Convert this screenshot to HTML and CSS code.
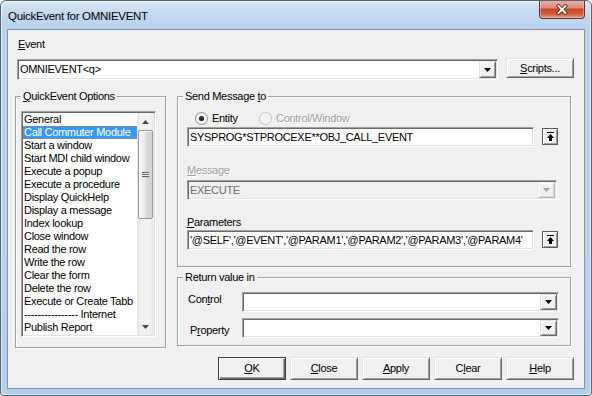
FILE: index.html
```html
<!DOCTYPE html>
<html>
<head>
<meta charset="utf-8">
<link rel="stylesheet" href="styles.css">
</head>
<body>
<div class="window">
  <div class="titlebar">
    <span class="title">QuickEvent for OMNIEVENT</span>
    <div class="close-btn">
      <svg width="12" height="11" viewBox="0 0 12 11"><path d="M2.5 2 L9.5 9 M9.5 2 L2.5 9" stroke="#5a2a24" stroke-width="3.6" stroke-linecap="square" fill="none"/><path d="M2.5 2 L9.5 9 M9.5 2 L2.5 9" stroke="#fff" stroke-width="1.8" stroke-linecap="square" fill="none"/></svg>
    </div>
  </div>
  <div class="client">
    <div class="event-label"><u>E</u>vent</div>
    <div class="event-row">
      <div class="combo combo-event">
        <span class="val">OMNIEVENT&lt;q&gt;</span>
        <span class="drop raised"><svg width="7" height="4" viewBox="0 0 7 4"><path d="M0 0H7L3.5 4Z" fill="#000"/></svg></span>
      </div>
      <button class="btn raised btn-scripts"><span><u>S</u>cripts...</span></button>
    </div>
    <div class="main">
      <div class="group group-options">
        <span class="legend"><u>Q</u>uickEvent Options</span>
        <div class="list sunken">
          <div class="items">
            <div class="item">General</div>
            <div class="item sel">Call Commuter Module</div>
            <div class="item">Start a window</div>
            <div class="item">Start MDI child window</div>
            <div class="item">Execute a popup</div>
            <div class="item">Execute a procedure</div>
            <div class="item">Display QuickHelp</div>
            <div class="item">Display a message</div>
            <div class="item">Index lookup</div>
            <div class="item">Close window</div>
            <div class="item">Read the row</div>
            <div class="item">Write the row</div>
            <div class="item">Clear the form</div>
            <div class="item">Delete the row</div>
            <div class="item">Execute or Create Tabb</div>
            <div class="item">---------------- Internet</div>
            <div class="item">Publish Report</div>
          </div>
          <div class="vscroll">
            <div class="sb-arrow"><svg width="7" height="4" viewBox="0 0 7 4"><path d="M3.5 0L7 4H0Z" fill="#4a4a4a"/></svg></div>
            <div class="thumb"><div class="grip"></div></div>
            <div class="sb-space"></div>
            <div class="sb-arrow"><svg width="7" height="4" viewBox="0 0 7 4"><path d="M0 0H7L3.5 4Z" fill="#4a4a4a"/></svg></div>
          </div>
        </div>
      </div>
      <div class="right">
        <div class="group group-send">
          <span class="legend">Send Message <u>t</u>o</span>
          <div class="radio-row">
            <div class="radio-opt first"><span class="radio"><span class="dot"></span></span><span>Entity</span></div>
            <div class="radio-opt"><span class="radio radio-dis"></span><span class="dis">Control/Window</span></div>
          </div>
          <div class="field-row">
            <div class="field sunken">SYSPROG*STPROCEXE**OBJ_CALL_EVENT</div>
            <div class="upbtn">
              <svg width="9" height="10" viewBox="0 0 9 10"><rect x="1" y="0" width="7" height="1" fill="#000"/><path d="M4.5 2L8 6H1Z" fill="#000"/><rect x="3" y="6" width="3" height="3" fill="#000"/></svg>
            </div>
          </div>
          <div class="label label-msg dis"><u>M</u>essage</div>
          <div class="combo combo-msg">
            <span class="val">EXECUTE</span>
            <span class="drop raised-dis"><svg width="7" height="4" viewBox="0 0 7 4"><path d="M0 0H7L3.5 4Z" fill="#a3a3a3"/></svg></span>
          </div>
          <div class="label label-par"><u>P</u>arameters</div>
          <div class="field-row field-row-par">
            <div class="field sunken">'@SELF','@EVENT','@PARAM1','@PARAM2','@PARAM3','@PARAM4'</div>
            <div class="upbtn">
              <svg width="9" height="10" viewBox="0 0 9 10"><rect x="1" y="0" width="7" height="1" fill="#000"/><path d="M4.5 2L8 6H1Z" fill="#000"/><rect x="3" y="6" width="3" height="3" fill="#000"/></svg>
            </div>
          </div>
        </div>
        <div class="group group-return">
          <span class="legend">Return value in</span>
          <div class="rv-row">
            <span class="rv-label rv-control">Con<u>t</u>rol</span>
            <div class="combo combo-rv">
              <span class="val"></span>
              <span class="drop raised"><svg width="7" height="4" viewBox="0 0 7 4"><path d="M0 0H7L3.5 4Z" fill="#000"/></svg></span>
            </div>
          </div>
          <div class="rv-row rv-row-2">
            <span class="rv-label rv-property">P<u>r</u>operty</span>
            <div class="combo combo-rv">
              <span class="val"></span>
              <span class="drop raised"><svg width="7" height="4" viewBox="0 0 7 4"><path d="M0 0H7L3.5 4Z" fill="#000"/></svg></span>
            </div>
          </div>
        </div>
      </div>
    </div>
    <div class="buttons">
      <button class="btn btn-dlg btn-default"><span><u>O</u>K</span></button>
      <button class="btn btn-dlg raised"><span><u>C</u>lose</span></button>
      <button class="btn btn-dlg raised"><span><u>A</u>pply</span></button>
      <button class="btn btn-dlg raised"><span>C<u>l</u>ear</span></button>
      <button class="btn btn-dlg raised"><span><u>H</u>elp</span></button>
    </div>
  </div>
</div>
</body>
</html>
```

FILE: styles.css
```css
html, body {
  margin: 0;
  padding: 0;
  background: #ffffff;
}

body {
  font-family: "Liberation Sans", Arial, sans-serif;
  font-size: 11px;
  line-height: 13px;
  letter-spacing: -0.3px;
  color: #000;
}

u {
  text-decoration: underline;
  text-underline-offset: 1px;
}

.window {
  width: 592px;
  height: 396px;
  box-sizing: border-box;
  border: 1px solid #51647a;
  border-radius: 6px 6px 3px 3px;
  background: linear-gradient(to bottom, #d6e7f8 0px, #c2d8f0 14px, #b9d2ee 28px, #b4cfec 100%);
  box-shadow: inset 0 0 0 1px rgba(255, 255, 255, 0.6);
  display: flex;
  flex-direction: column;
  overflow: hidden;
}

.titlebar {
  height: 28px;
  flex: none;
  display: flex;
  align-items: center;
  padding: 2px 0 0 7px;
  box-sizing: border-box;
  position: relative;
}

.title {
  font-size: 11.5px;
  letter-spacing: -0.3px;
  color: #000;
}

.close-btn {
  position: absolute;
  top: -1px;
  right: 6px;
  width: 46px;
  height: 19px;
  box-sizing: border-box;
  border: 1px solid #6e2d24;
  border-top: none;
  border-radius: 0 0 4px 4px;
  background: linear-gradient(to bottom, #ebb3a6 0%, #df8e7c 42%, #c8442c 52%, #d1603f 78%, #e49a85 100%);
  box-shadow: inset 0 0 0 1px rgba(255, 220, 210, 0.45);
  display: flex;
  align-items: center;
  justify-content: center;
}

.client {
  flex: 1;
  min-height: 0;
  margin: 0 6px 6px 6px;
  border: 1px solid #8494a8;
  background: #f0f0f0;
  display: flex;
  flex-direction: column;
}

/* generic 3D styles */
.sunken {
  border: 1px solid;
  border-color: #a0a0a0 #ffffff #ffffff #a0a0a0;
  box-shadow: inset 1px 1px 0 #696969, inset -1px -1px 0 #e3e3e3;
}

.raised {
  background: #f0f0f0;
  box-sizing: border-box;
  border: 1px solid;
  border-color: #e3e3e3 #696969 #696969 #e3e3e3;
  box-shadow: inset 1px 1px 0 #ffffff, inset -1px -1px 0 #a0a0a0;
}

.raised-dis {
  background: #f0f0f0;
  box-sizing: border-box;
  border: 1px solid;
  border-color: #f0f0f0 #b9b9b9 #b9b9b9 #f0f0f0;
  box-shadow: inset 1px 1px 0 #ffffff, inset -1px -1px 0 #d6d6d6;
}

.dis {
  color: #a0a0a0;
  text-shadow: 1px 1px 0 #ffffff;
}

/* event row */
.event-label {
  margin: 8px 0 0 10px;
}

.event-row {
  display: flex;
  align-items: flex-start;
  margin-top: 7px;
  padding-left: 9px;
}

.combo {
  box-sizing: border-box;
  display: flex;
  background: #ffffff;
  border: 1px solid;
  border-color: #a0a0a0 #ffffff #ffffff #a0a0a0;
  box-shadow: inset 1px 1px 0 #696969, inset -1px -1px 0 #e3e3e3;
  padding: 1px;
}

.combo .val {
  flex: 1;
  min-width: 0;
  padding-left: 1px;
  align-self: center;
  white-space: nowrap;
  overflow: hidden;
}

.combo .drop {
  width: 17px;
  flex: none;
  display: flex;
  align-items: center;
  justify-content: center;
}

.combo-event {
  width: 481px;
  height: 21px;
  margin-top: 1px;
}

.btn {
  font: inherit;
  letter-spacing: inherit;
  color: #000;
  padding: 0;
  margin: 0;
  width: 68px;
  display: flex;
  align-items: center;
  justify-content: center;
  appearance: none;
  -webkit-appearance: none;
  outline: none;
}

.btn-scripts {
  height: 20px;
  margin-left: 8px;
}

/* main */
.main {
  display: flex;
  align-items: flex-start;
  margin-top: 16px;
  padding-left: 7px;
}

.group {
  box-sizing: border-box;
  position: relative;
  border: 1px solid #a0a0a0;
  box-shadow: 1px 1px 0 #ffffff, inset 1px 1px 0 #ffffff;
}

.legend {
  position: absolute;
  top: -7px;
  left: 5px;
  padding: 0 2px;
  background: #f0f0f0;
  line-height: 13px;
  white-space: nowrap;
}

.group-options {
  width: 151px;
  height: 252px;
  padding: 14px 0 0 5px;
}

.list {
  box-sizing: border-box;
  width: 135px;
  height: 226px;
  padding: 1px;
  background: #ffffff;
  display: flex;
  overflow: hidden;
}

.items {
  flex: 1;
  min-width: 0;
  overflow: hidden;
}

.item {
  height: 13px;
  line-height: 13px;
  padding-left: 1px;
  white-space: nowrap;
  overflow: hidden;
}

.item.sel {
  background: #3399ff;
  color: #ffffff;
  outline: 1px dotted #d07a2a;
  outline-offset: -1px;
}

.vscroll {
  width: 17px;
  flex: none;
  display: flex;
  flex-direction: column;
  background: linear-gradient(to right, #e4e4e4 0%, #f2f2f2 25%, #f2f2f2 75%, #e9e9e9 100%);
}

.sb-arrow {
  height: 17px;
  flex: none;
  display: flex;
  align-items: center;
  justify-content: center;
}

.thumb {
  height: 89px;
  margin: 0 1px 0 1px;
  box-sizing: border-box;
  border: 1px solid #979797;
  border-radius: 2px;
  background: linear-gradient(to right, #f6f6f6 0%, #ebebeb 45%, #dbdbdb 55%, #d3d3d3 100%);
  box-shadow: inset 1px 1px 0 rgba(255, 255, 255, 0.8);
  display: flex;
  align-items: center;
  justify-content: center;
  flex: none;
}

.grip {
  width: 7px;
  height: 5px;
  background: repeating-linear-gradient(to bottom, #5f5f5f 0px, #5f5f5f 1px, #f2f2f2 1px, #f2f2f2 2px);
}

.sb-space {
  flex: 1;
}

.right {
  margin-left: 11px;
  display: flex;
  flex-direction: column;
}

.group-send {
  width: 394px;
  height: 171px;
  padding: 15px 0 0 9px;
}

.radio-row {
  display: flex;
  align-items: center;
  height: 13px;
  padding-left: 8px;
}

.radio-opt {
  display: flex;
  align-items: center;
  gap: 4px;
}

.radio-opt.first {
  width: 64px;
}

.radio {
  width: 13px;
  height: 13px;
  box-sizing: border-box;
  border-radius: 50%;
  border: 1px solid #8d8d8d;
  background: radial-gradient(circle at 50% 50%, #e4e4e4 0%, #f4f4f4 55%, #fdfdfd 100%);
  display: flex;
  align-items: center;
  justify-content: center;
  flex: none;
}

.radio-dis {
  border-color: #c4c4c4;
  background: #f4f4f4;
}

.dot {
  width: 5px;
  height: 5px;
  border-radius: 50%;
  background: radial-gradient(circle at 40% 35%, #3a3a3a, #0a0a0a);
}

.field-row {
  display: flex;
  align-items: flex-start;
  margin-top: 2px;
}

.field {
  box-sizing: border-box;
  width: 347px;
  height: 20px;
  background: #ffffff;
  padding: 0 2px;
  line-height: 18px;
  white-space: nowrap;
  overflow: hidden;
}

.upbtn {
  width: 16px;
  height: 17px;
  margin: 1px 0 0 8px;
  box-sizing: border-box;
  border: 1px solid #5e5e5e;
  box-shadow: inset 1px 1px 0 #ffffff, inset -1px -1px 0 #a0a0a0;
  background: #f0f0f0;
  display: flex;
  align-items: center;
  justify-content: center;
}

.label-msg {
  margin-top: 17px;
}

.combo-msg {
  width: 370px;
  height: 20px;
  margin-top: 3px;
  background: #f0f0f0;
  color: #6d6d6d;
}

.label-par {
  margin-top: 16px;
}

.field-row-par {
  margin-top: 1px;
}

.group-return {
  width: 394px;
  height: 69px;
  margin-top: 10px;
  padding-top: 14px;
}

.rv-row {
  display: flex;
  align-items: flex-start;
}

.rv-row-2 {
  margin-top: 6px;
}

.rv-label {
  width: 64px;
  box-sizing: border-box;
  white-space: nowrap;
}

.rv-control {
  padding-left: 10px;
  margin-top: 1px;
}

.rv-property {
  padding-left: 12px;
  margin-top: 6px;
}

.combo-rv {
  width: 317px;
  height: 20px;
}

/* bottom buttons */
.buttons {
  display: flex;
  justify-content: flex-end;
  gap: 4px;
  margin-top: 9px;
  padding-right: 10px;
}

.btn-dlg {
  height: 23px;
}

.btn-default {
  background: #f0f0f0;
  box-sizing: border-box;
  border: 1px solid #3c3c3c;
  box-shadow: inset 1px 1px 0 #ffffff, inset -1px -1px 0 #696969, inset -2px -2px 0 #a0a0a0;
}
```
